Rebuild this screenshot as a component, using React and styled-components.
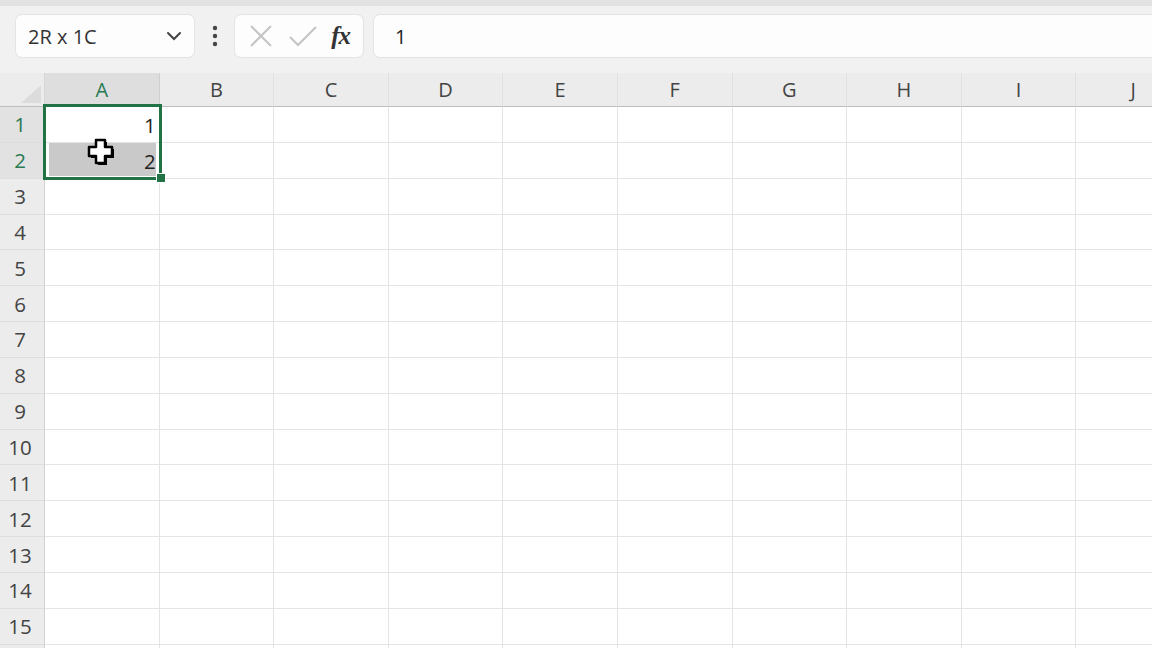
import React from "react";
import styled, { createGlobalStyle } from "styled-components";

const GlobalStyle = createGlobalStyle`
  html, body { margin: 0; padding: 0; }
  body { font-family: "Open Sans", "Noto Sans", "Liberation Sans", sans-serif; background: #f1f1f1; }
`;

const COL_W = 114.6;
const ROW_H = 35.85;
const HEAD_W = 45;
const HEAD_H = 34;
const columns = ["A", "B", "C", "D", "E", "F", "G", "H", "I", "J"];
// row 16 only peeks in at the bottom edge, so its number isn't shown
const rows = Array.from({ length: 16 }, (_, i) => i + 1);
const LAST_LABEL = 15;

const Page = styled.div`
  width: 1152px;
  height: 648px;
  overflow: hidden;
  display: flex;
  flex-direction: column;
  background: #f1f1f1;
  border-top: 6px solid #e2e2e2;
  box-sizing: border-box;
`;

const Toolbar = styled.div`
  display: flex;
  align-items: center;
  flex-shrink: 0;
  height: 67px;
  padding: 9px 0 16px 16px;
  box-sizing: border-box;
`;

const Box = styled.div`
  height: 42px;
  background: #fdfdfd;
  border-radius: 6px;
  box-shadow: 0 0 0 1px #e4e4e4;
  display: flex;
  align-items: center;
  box-sizing: border-box;
`;

const NameBox = styled(Box)`
  width: 178px;
  padding: 0 10px 0 12px;
  justify-content: space-between;
  font-size: 20px;
  color: #333;
`;

const Kebab = styled.div`
  width: 41px;
  display: flex;
  justify-content: center;
`;

const FormulaButtons = styled(Box)`
  width: 128px;
  justify-content: space-around;
  padding: 0 6px;
`;

const Fx = styled.span`
  font-family: "Liberation Serif", "DejaVu Serif", serif;
  font-style: italic;
  font-weight: bold;
  font-size: 25px;
  color: #333;
  letter-spacing: -1px;
`;

const FormulaInput = styled(Box)`
  flex: 1;
  margin-left: 11px;
  padding-left: 21px;
  border-radius: 6px 0 0 6px;
  font-size: 20px;
  color: #222;
`;

const Sheet = styled.div`
  position: relative;
  flex-shrink: 0;
  display: grid;
  grid-template-columns: ${HEAD_W}px repeat(10, ${COL_W}px);
  grid-auto-rows: ${ROW_H}px;
  grid-template-rows: ${HEAD_H}px;
  background: #fff;
`;

const Corner = styled.div`
  background: #ececec;
  border-bottom: 1px solid #bdbdbd;
  border-right: 1px solid #d6d6d6;
  position: relative;
  &::after {
    content: "";
    position: absolute;
    right: 3px;
    bottom: 3px;
    border-left: 20px solid transparent;
    border-bottom: 18px solid #dcdcdc;
  }
`;

const ColHead = styled.div`
  background: ${(p) => (p.$active ? "#dedede" : "#ececec")};
  border-bottom: 1px solid #bdbdbd;
  border-right: 1px solid ${(p) => (p.$active ? "#cfcfcf" : "#e0e0e0")};
  display: flex;
  align-items: center;
  justify-content: center;
  font-size: 20px;
  color: ${(p) => (p.$active ? "#2a7a52" : "#444")};
`;

const RowHead = styled.div`
  background: ${(p) => (p.$active ? "#e2e2e2" : "#ececec")};
  border-bottom: 1px solid #dedede;
  border-right: 1px solid #d2d2d2;
  display: flex;
  align-items: center;
  justify-content: center;
  padding-right: 4px;
  font-size: 20.5px;
  color: ${(p) => (p.$active ? "#2a7a52" : "#444")};
`;

const Cell = styled.div`
  background: #fff;
  border-bottom: 1px solid #e4e4e4;
  border-right: 1px solid #e4e4e4;
`;

const Selection = styled.div`
  position: absolute;
  left: ${HEAD_W - 2}px;
  top: ${HEAD_H - 3}px;
  width: ${COL_W + 4}px;
  height: ${ROW_H * 2 + 4}px;
  border: 3px solid #217346;
  box-sizing: border-box;
  pointer-events: none;
`;

const ShadeInset = styled.div`
  position: absolute;
  left: ${HEAD_W + 4}px;
  top: ${HEAD_H + ROW_H}px;
  width: ${COL_W - 8}px;
  height: ${ROW_H - 3}px;
  background: #c9c9c9;
`;

const Handle = styled.div`
  position: absolute;
  left: ${HEAD_W + COL_W - 4}px;
  top: ${HEAD_H + ROW_H * 2 - 6}px;
  width: 8px;
  height: 8px;
  background: #217346;
  border: 1px solid #fff;
`;

const CellValue = styled.span`
  position: absolute;
  right: ${1152 - HEAD_W - COL_W + 4}px;
  top: ${(p) => HEAD_H + ROW_H * p.$row}px;
  height: ${ROW_H}px;
  display: flex;
  align-items: center;
  font-size: 20.5px;
  color: #222;
`;

const Cursor = styled.svg`
  position: absolute;
  left: 86px;
  top: 64px;
`;

export default function App() {
  return (
    <Page>
      <GlobalStyle />
      <Toolbar>
        <NameBox>
          <span>2R x 1C</span>
          <svg width="20" height="20" viewBox="0 0 20 20">
            <path d="M4 7 L10 13 L16 7" fill="none" stroke="#444" strokeWidth="2" strokeLinecap="round" />
          </svg>
        </NameBox>
        <Kebab>
          <svg width="6" height="22" viewBox="0 0 6 22">
            <circle cx="3" cy="3" r="2.2" fill="#444" />
            <circle cx="3" cy="11" r="2.2" fill="#444" />
            <circle cx="3" cy="19" r="2.2" fill="#444" />
          </svg>
        </Kebab>
        <FormulaButtons>
          <svg width="26" height="26" viewBox="0 0 26 26">
            <path d="M3 3 L23 23 M23 3 L3 23" stroke="#c4c4c4" strokeWidth="2" fill="none" />
          </svg>
          <svg width="30" height="26" viewBox="0 0 30 26">
            <path d="M2 14 L10 22 L28 4" stroke="#c4c4c4" strokeWidth="2" fill="none" />
          </svg>
          <Fx>fx</Fx>
        </FormulaButtons>
        <FormulaInput>1</FormulaInput>
      </Toolbar>
      <Sheet>
        <Corner />
        {columns.map((c, i) => (
          <ColHead key={c} $active={i === 0}>{c}</ColHead>
        ))}
        {rows.map((r) => (
          <React.Fragment key={r}>
            <RowHead $active={r <= 2}>{r <= LAST_LABEL ? r : null}</RowHead>
            {columns.map((c) => (
              <Cell key={c} />
            ))}
          </React.Fragment>
        ))}
        <ShadeInset />
        <CellValue $row={0}>1</CellValue>
        <CellValue $row={1}>2</CellValue>
        <Selection />
        <Handle />
        <Cursor width="32" height="32" viewBox="0 0 32 32">
          <path
            d="M10 3 H19 V10 H26 V19 H19 V26 H10 V19 H3 V10 H10 Z"
            fill="#000"
            transform="translate(2 2)"
          />
          <path
            d="M10 3 H19 V10 H26 V19 H19 V26 H10 V19 H3 V10 H10 Z"
            fill="#fff"
            stroke="#000"
            strokeWidth="2.5"
            strokeLinejoin="round"
          />
        </Cursor>
      </Sheet>
    </Page>
  );
}
